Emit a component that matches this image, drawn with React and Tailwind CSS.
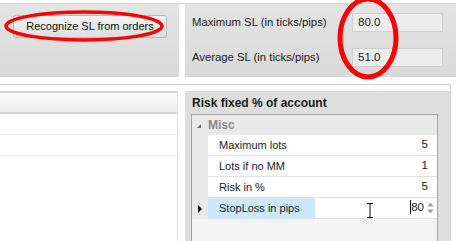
import React from 'react';

const rows = [
  { label: 'Maximum lots', value: '5' },
  { label: 'Lots if no MM', value: '1' },
  { label: 'Risk in %', value: '5' },
];

function SlField({ label, value }) {
  return (
    <div className="flex items-center h-[19px]">
      <span className="w-[160px] text-[11.3px] text-[#222]">{label}</span>
      <div className="w-[91px] h-[19px] bg-[#ececec] border border-[#cfcfcf] flex items-center pl-[5px] text-[11.5px] text-[#222]">
        {value}
      </div>
    </div>
  );
}

export default function App() {
  return (
    <div
      className="relative w-[456px] h-[241px] bg-white overflow-hidden"
      style={{ fontFamily: '"Liberation Sans", Arial, sans-serif' }}
    >
      {/* top strip */}
      <div className="mt-[3px] border-t border-[#d6d6d6] flex h-[74px]">
        <div className="w-[179px] bg-gradient-to-b from-[#e4e4e4] to-[#d9d9d9] pl-[13px] pt-[9px]">
          <button className="w-[154px] h-[23px] rounded-[3px] border border-[#b9b9b9] bg-gradient-to-b from-[#f4f4f4] to-[#dedede] text-[11px] text-[#111]">
            Recognize SL from orders
          </button>
        </div>
        <div className="w-[6px]" />
        <div className="flex-1 bg-gradient-to-b from-[#e4e4e4] to-[#d9d9d9] pl-[7px] pt-[9px] flex flex-col gap-[16px]">
          <SlField label="Maximum SL (in ticks/pips)" value="80.0" />
          <SlField label="Average SL (in ticks/pips)" value="51.0" />
        </div>
      </div>

      {/* bottom area */}
      <div className="mt-[7px] w-[451px] h-[160px] border-t border-r border-[#cfcfcf] flex pt-[6px]">
        <div className="w-[178px] border-r border-[#e2e2e2] flex flex-col">
          <div className="h-[23px] border-t-2 border-b-2 border-[#d4d4d4] bg-gradient-to-b from-[#fbfbfb] to-[#ececec]" />
          <div className="h-[21px] border-b border-[#ededed]" />
          <div className="h-[21px] border-b border-[#ededed]" />
        </div>
        <div className="w-[7px]" />
        <div className="flex-1 bg-[#dedede] pl-[6px] pr-[12px] flex flex-col">
          <div className="h-[23px] flex items-center text-[12px] font-bold text-[#1a1a1a] pl-[1px]">
            Risk fixed % of account
          </div>
          <div className="flex-1 border border-[#a4a4a4] bg-[#f4f4f4] flex flex-col">
            <div className="h-[20px] bg-[#e9e9e9] flex items-center">
              <svg width="16" height="20" viewBox="0 0 16 20" className="shrink-0">
                <path d="M5 13 L9 13 L9 9 Z" fill="#6a6a6a" />
              </svg>
              <span className="text-[12px] font-bold text-[#8c8c8c]">Misc</span>
            </div>
            {rows.map((r) => (
              <div key={r.label} className="h-[21px] flex bg-[#e9e9e9]">
                <div className="w-[16px] shrink-0" />
                <div className="flex-1 bg-white border-b border-[#e2e2e2] flex items-center justify-between pl-[11px] pr-[9px] text-[11px] text-[#222]">
                  <span>{r.label}</span>
                  <span className="text-[11.5px]">{r.value}</span>
                </div>
              </div>
            ))}
            <div className="h-[21px] flex bg-[#e9e9e9]">
              <div className="w-[16px] shrink-0 flex items-center justify-center">
                <svg width="6" height="8" viewBox="0 0 6 8">
                  <path d="M1 0 L5 4 L1 8 Z" fill="#111" />
                </svg>
              </div>
              <div className="flex-1 flex border-b border-[#e2e2e2] text-[11px] text-[#222]">
                <div className="w-[107px] bg-[#cce8ff] flex items-center pl-[11px]">StopLoss in pips</div>
                <div className="flex-1 bg-white flex items-center justify-end pr-[3px] relative">
                  <svg width="8" height="15" viewBox="0 0 8 15" className="absolute left-[51px] top-[5px]">
                    <path d="M1 0.5 H7 M4 0.5 V14.5 M1 14.5 H7" stroke="#111" strokeWidth="1" fill="none" />
                  </svg>
                  <span className="relative text-[11.5px]">
                    <span className="absolute left-[-1px] top-[1px] w-px h-[14px] bg-[#111]" />
                    80
                  </span>
                  <div className="ml-[3px] flex flex-col gap-[2px]">
                    <svg width="7" height="5" viewBox="0 0 7 5">
                      <path d="M0.5 4.5 L3.5 0.5 L6.5 4.5 Z" fill="#9a9a9a" />
                    </svg>
                    <svg width="7" height="5" viewBox="0 0 7 5">
                      <path d="M0.5 0.5 L3.5 4.5 L6.5 0.5 Z" fill="#9a9a9a" />
                    </svg>
                  </div>
                </div>
              </div>
            </div>
          </div>
        </div>
      </div>

      {/* red annotation circles */}
      <svg className="absolute left-0 top-0 pointer-events-none" width="456" height="241">
        <ellipse cx="84" cy="26" rx="78" ry="14" fill="none" stroke="#ff0000" strokeWidth="3.5" />
        <ellipse cx="368" cy="38" rx="28" ry="39" fill="none" stroke="#ff0000" strokeWidth="5" />
      </svg>
    </div>
  );
}
